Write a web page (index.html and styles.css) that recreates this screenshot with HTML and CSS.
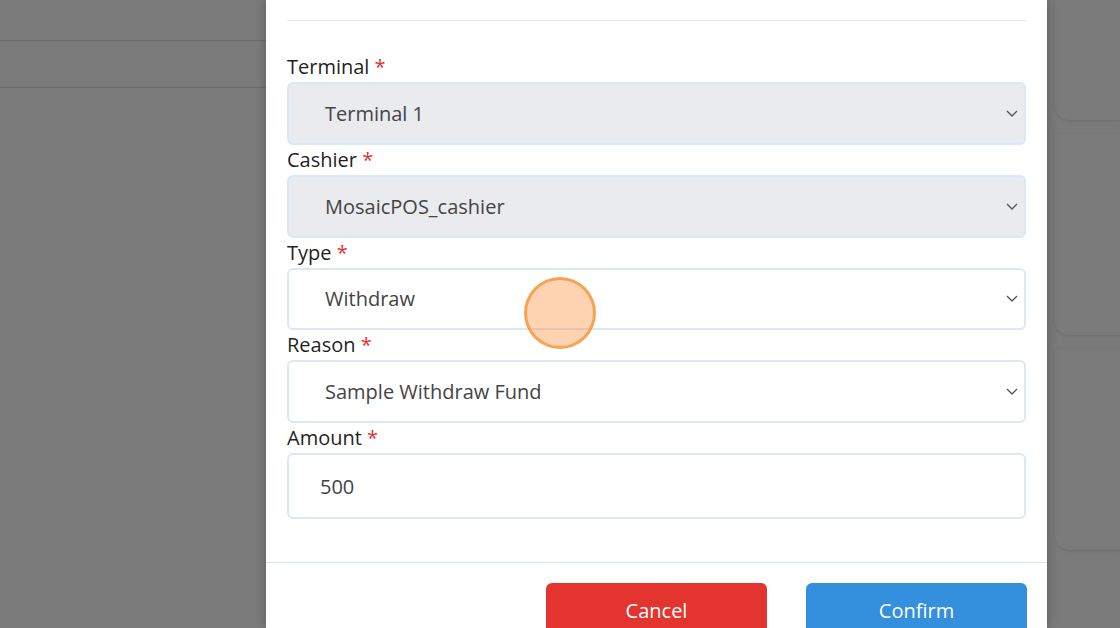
FILE: index.html
```
<!DOCTYPE html>
<html lang="en">
<head>
    <meta charset="UTF-8">
    <meta name="viewport" content="width=device-width, initial-scale=1.0">
    <title>Cash Drawer - MosaicPOS</title>
    <link rel="stylesheet" href="styles.css">
</head>
<body>
    <div class="backdrop">
        <div class="side-left">
            <div class="row"></div>
            <div class="row row-tall"></div>
        </div>

        <div class="modal">
            <div class="modal-head"></div>

            <div class="modal-body">
                <label class="field-label">Terminal <span class="req">*</span></label>
                <div class="select filled">
                    <span>Terminal 1</span>
                    <svg class="chevron" viewBox="0 0 12 7"><path d="M1 1l5 5 5-5" fill="none" stroke="#555" stroke-width="1.4"/></svg>
                </div>

                <label class="field-label">Cashier <span class="req">*</span></label>
                <div class="select filled">
                    <span>MosaicPOS_cashier</span>
                    <svg class="chevron" viewBox="0 0 12 7"><path d="M1 1l5 5 5-5" fill="none" stroke="#555" stroke-width="1.4"/></svg>
                </div>

                <label class="field-label">Type <span class="req">*</span></label>
                <div class="select">
                    <span>Withdraw</span>
                    <svg class="chevron" viewBox="0 0 12 7"><path d="M1 1l5 5 5-5" fill="none" stroke="#555" stroke-width="1.4"/></svg>
                </div>

                <label class="field-label">Reason <span class="req">*</span></label>
                <div class="select">
                    <span>Sample Withdraw Fund</span>
                    <svg class="chevron" viewBox="0 0 12 7"><path d="M1 1l5 5 5-5" fill="none" stroke="#555" stroke-width="1.4"/></svg>
                </div>

                <label class="field-label">Amount <span class="req">*</span></label>
                <div class="input">500</div>
            </div>

            <div class="modal-foot">
                <button class="btn btn-cancel">Cancel</button>
                <button class="btn btn-confirm">Confirm</button>
            </div>

            <div class="cursor-dot"></div>
        </div>

        <div class="side-right">
            <div class="card card-1"></div>
            <div class="card card-2"></div>
            <div class="card card-3"></div>
        </div>
    </div>
</body>
</html>
```

FILE: styles.css
```
body {
    margin: 0;
    padding: 0;
    font-family: "Open Sans", Arial, sans-serif;
    background-color: #7a7a7a;
    overflow: hidden;
}

.backdrop {
    display: flex;
    height: 628px;
    background-color: #7a7a7a;
}

/* left side of the page behind the overlay */
.side-left {
    width: 266px;
    flex-shrink: 0;
}

.side-left .row {
    height: 40px;
    border-bottom: 1px solid #6c6c6c;
}

.side-left .row-tall {
    height: 46px;
}

/* modal */
.modal {
    position: relative;
    width: 781px;
    flex-shrink: 0;
    background-color: white;
    box-shadow: 0 0 10px rgba(0, 0, 0, 0.25);
    z-index: 1;
}

.modal-head {
    height: 20px;
    margin: 0 21px;
    border-bottom: 1px solid #e3e6ea;
}

.modal-body {
    padding: 31px 21px 0;
}

.field-label {
    display: block;
    height: 30px;
    line-height: 30px;
    font-size: 20px;
    color: #1f1f1f;
}

.req {
    color: #e3342f;
}

.select, .input {
    box-sizing: border-box;
    height: 62.75px;
    border: 2px solid #dce7f6;
    border-radius: 6px;
    display: flex;
    align-items: center;
    justify-content: space-between;
    padding: 0 6px 0 36px;
    font-size: 20px;
    color: #444;
}

.chevron {
    display: block;
    flex-shrink: 0;
    width: 12px;
    height: 7px;
}

.select.filled {
    background-color: #e9ebef;
}

.input {
    height: 66px;
    padding-left: 31px;
}

.modal-foot {
    margin-top: 43px;
    border-top: 1px solid #d6e4f0;
    padding: 20px 20px 0;
    display: flex;
    justify-content: flex-end;
    gap: 39px;
}

.btn {
    width: 221px;
    height: 54px;
    border: none;
    border-radius: 6px;
    color: white;
    font-family: inherit;
    font-size: 20px;
    cursor: pointer;
}

.btn-cancel {
    background-color: #e3342f;
}

.btn-confirm {
    background-color: #3490dc;
}

/* click marker from the recording */
.cursor-dot {
    position: absolute;
    left: 258px;
    top: 277px;
    width: 66px;
    height: 66px;
    border-radius: 50%;
    border: 3px solid rgba(247, 150, 60, 0.8);
    background-color: rgba(251, 146, 60, 0.4);
}

/* right side cards behind the overlay */
.side-right {
    flex: 1;
    padding-left: 8px;
}

.card {
    border-radius: 0 0 0 14px;
    box-shadow: 0 1px 3px rgba(0, 0, 0, 0.12);
    margin-bottom: 14px;
}

.card-1 {
    height: 120px;
}

.card-2 {
    height: 201px;
}

.card-3 {
    height: 201px;
}
```
